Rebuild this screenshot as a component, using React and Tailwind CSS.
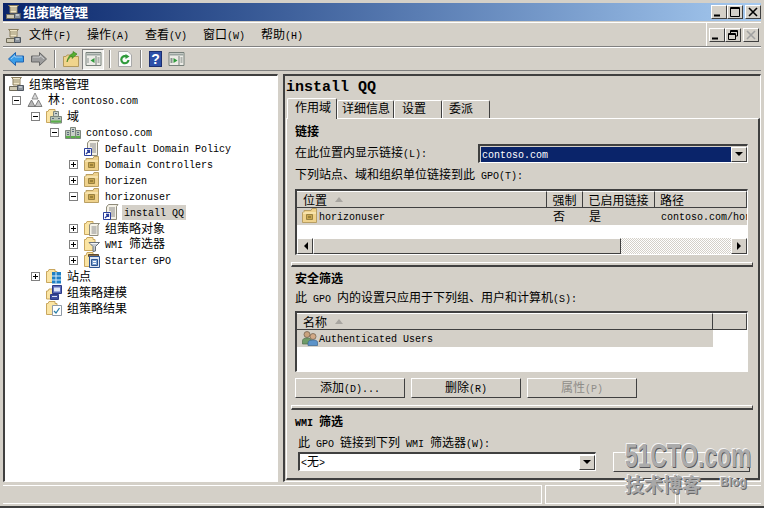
import React from 'react';

// latin runs are 6px wide per char like SimSun, cjk runs 12px
const T = ({ children, className = '' }) => (
  <span className={`whitespace-pre ${className}`}>
    {String(children)
      .split(/([\x00-\x7f]+)/)
      .filter(Boolean)
      .map((s, i) =>
        /^[\x00-\x7f]/.test(s) ? (
          <span key={i} className="font-['Liberation_Mono',monospace] text-[10px]">{s}</span>
        ) : (
          <span key={i}>{s}</span>
        )
      )}
  </span>
);

const Svg = ({ children, className = 'w-4 h-4' }) => (
  <svg viewBox="0 0 16 16" className={`shrink-0 ${className}`}>{children}</svg>
);

const Folder = () => (
  <path d="M.5 14.5V3.5H2L3 1.5H9V3.5H11V14.5Z" fill="#fbe5a4" stroke="#c9a75f" />
);

const ManagerIcon = () => (
  <Svg>
    <path d="M3.5 1.5H13.5L12 3V9H5V3Z" fill="#f0e6c8" stroke="#8b7f5f" />
    <path d="M5 4H11M5 6H11" stroke="#9a9070" />
    <path d="M1.5 10.5H11V14.5H1.5Z" fill="#cfc9b4" stroke="#6f6a58" />
    <path d="M9.5 9.5H15.5V14.5H9.5Z" fill="#8d949c" stroke="#4f5660" />
    <path d="M11 11H14" stroke="#e8eef4" />
  </Svg>
);
const ForestIcon = () => (
  <Svg>
    <path d="M8 1L11 7H5Z" fill="#d8d8d8" stroke="#777" strokeWidth=".8" />
    <path d="M4.5 8L8 14.5H1Z" fill="#b5b5b5" stroke="#666" strokeWidth=".8" />
    <path d="M11.5 8L15 14.5H8Z" fill="#c8c8c8" stroke="#666" strokeWidth=".8" />
  </Svg>
);
const Building = () => (
  <>
    <path d="M5.5 3.5H10.5V14.5H5.5Z" fill="#c9d0c9" stroke="#7d877d" />
    <path d="M.5 6.5H5.5V14.5H.5ZM10.5 6.5H15.5V14.5H10.5Z" fill="#b6c2b6" stroke="#7d877d" />
    <path d="M7 5.5H9M7 7.5H9M2 8.5H4M12 8.5H14M2 10.5H4M12 10.5H14" stroke="#5a6b7c" />
    <path d="M1 13H5M6 13H10M11 13H15" stroke="#5bb04a" strokeWidth="2" />
  </>
);
const DomainIcon = () => <Svg><Building /></Svg>;
const DomainsIcon = () => (
  <Svg>
    <Folder />
    <path d="M7.5 3.5H12.5V15H7.5Z" fill="#c9d0c9" stroke="#7d877d" />
    <path d="M4.5 8.5H15.5V15H4.5Z" fill="#b6c2b6" stroke="#7d877d" />
    <path d="M9 5.5H11M6 10.5H8M12 10.5H14" stroke="#5a6b7c" />
    <path d="M5 13.5H15" stroke="#5bb04a" strokeWidth="2" />
  </Svg>
);
const GpoIcon = () => (
  <Svg>
    <path d="M5.5 .5H15L13.5 2.5V15.5H3.5V3Z" fill="#f4f1e6" stroke="#8f8b7a" />
    <path d="M6 4H12M6 6H12M8 8H12M8 10H12M8 12H12" stroke="#8a8a8a" />
    <path d="M.5 8.5H7.5V15.5H.5Z" fill="#ffffff" stroke="#2b3f9c" />
    <path d="M2 14L5.5 10.5M3 10.5H5.5V13" stroke="#2b3f9c" strokeWidth="1.3" fill="none" />
  </Svg>
);
const OuIcon = () => (
  <Svg>
    <path d="M.5 4.5H2V2.5L9 2.5L10 .5H14.5V14.5H.5Z" fill="#efd28c" stroke="#b99f63" />
    <path d="M1 5H14" stroke="#fff2c8" />
    <path d="M4.5 6.5H10.5V11.5H4.5Z" fill="#c8a650" stroke="#9a8240" />
    <path d="M6 9H9" stroke="#6d5a20" />
  </Svg>
);
const GpoFolderIcon = () => (
  <Svg>
    <Folder />
    <path d="M6.5 3.5H15.5L14 5V15.5H5.5V5Z" fill="#f6f3e8" stroke="#8f8b7a" />
    <path d="M7.5 7H12.5M7.5 9H12.5M7.5 11H12.5M7.5 13H12.5" stroke="#8a8a8a" />
  </Svg>
);
const WmiIcon = () => (
  <Svg>
    <Folder />
    <path d="M5 6.5H15.5L11.5 10.5V15L9 15.5V10.5Z" fill="#c5cbd2" stroke="#68707a" />
    <path d="M6.5 7.5H14" stroke="#f4f6f8" />
  </Svg>
);
const StarterIcon = () => (
  <Svg>
    <path d="M.5 14.5V3.5H2L3 .5H9V3.5H11V14.5Z" fill="#fbe5a4" stroke="#c9a75f" />
    <path d="M4.5 2.5H14.5V4.5H4.5Z" fill="#8a6f4a" stroke="#5f4a2f" />
    <path d="M5.5 4.5H15.5V15.5H5.5Z" fill="#dfe7f2" stroke="#2f5590" />
    <path d="M7.5 7.5H13.5V13.5H7.5Z" fill="#7ea2cf" stroke="#2f5590" />
    <path d="M9 9.5H12M9 11.5H12" stroke="#fff" />
  </Svg>
);
const SitesIcon = () => (
  <Svg>
    <Folder />
    <path d="M6 4H15V15.5H6Z" fill="#1f7fc4" />
    <path d="M10 4V15.5M6 8H15M6 12H15" stroke="#d6ecfa" />
  </Svg>
);
const ModelingIcon = () => (
  <Svg>
    <path d="M.5 15V7H2L3 5H7V15Z" fill="#fbe5a4" stroke="#c9a75f" />
    <path d="M6.5 1.5H15.5V9.5H6.5Z" fill="#5b6ab8" stroke="#2c3a86" />
    <path d="M8 3.5H14V7.5H8Z" fill="#dfe6fa" />
    <path d="M4.5 10.5H12.5V15.5H4.5Z" fill="#3f4f9e" stroke="#2c3a86" />
    <path d="M6 12.5H11" stroke="#d8e0f8" />
  </Svg>
);
const ResultsIcon = () => (
  <Svg>
    <Folder />
    <path d="M6.5 5.5H15.5V15.5H6.5Z" fill="#fff" stroke="#8f9aa6" />
    <path d="M8 11L10 13L13.5 8" stroke="#2c7fa8" strokeWidth="1.3" fill="none" />
  </Svg>
);
const UsersIcon = () => (
  <Svg>
    <circle cx="5" cy="4.5" r="3" fill="#c9a27e" stroke="#6b5a48" strokeWidth=".7" />
    <path d="M.5 14V11Q.5 8 5 8T9.5 11V14Z" fill="#6f9c68" stroke="#4c6c48" strokeWidth=".7" />
    <circle cx="11" cy="6.5" r="3" fill="#d2a987" stroke="#6b5a48" strokeWidth=".7" />
    <path d="M6 15.5V13Q6 10 11 10T15.5 13V15.5Z" fill="#5c93c9" stroke="#38648f" strokeWidth=".7" />
  </Svg>
);

const Arrow = ({ flip, color, edge }) => (
  <svg viewBox="0 0 16 14" className={`w-4 h-[14px] shrink-0 ${flip ? '-scale-x-100' : ''}`}>
    <path d="M.5 7L7.5 .5V4H15.5V10H7.5V13.5Z" fill={color} stroke={edge} />
    <path d="M3 7L7 3.5V5H14" stroke="#ffffff" strokeOpacity=".5" fill="none" />
  </svg>
);
const UpIcon = () => (
  <Svg>
    <path d="M.5 5.5H3L4 4H7V5.5H15.5V15.5H.5Z" fill="#f0d48c" stroke="#b39a5f" />
    <path d="M4 11C5 8 7 6 9 5V7.5L14 3L10 .5V2.5C7 3 4.5 7 4 11Z" fill="#58b032" stroke="#2f7a1a" strokeWidth=".6" />
  </Svg>
);
const PaneIcon = ({ right }) => (
  <Svg className="w-[17px] h-4">
    <path d="M.5 1.5H15.5V14.5H.5Z" fill="#ecebe6" stroke="#77807a" />
    <path d="M1 2.5H15V4.5H1Z" fill="#9aa4a0" />
    <path d="M10.5 5V14" stroke="#77807a" />
    <path d="M12 7H14M12 9H14M12 11H14" stroke="#77807a" />
    {right ? (
      <path d="M5 7V12L9 9.5Z" fill="#2f9a3a" />
    ) : (
      <path d="M9 7V12L5 9.5Z" fill="#2f9a3a" />
    )}
    <path d={right ? 'M2 7H4V12H2Z' : 'M2 7H3V12H2Z'} fill="#8a9490" />
  </Svg>
);
const RefreshIcon = () => (
  <Svg>
    <path d="M1.5 .5H11L14.5 4V15.5H1.5Z" fill="#fafafa" stroke="#a9a9a9" />
    <path d="M11.5 9A3.6 3.6 0 1 1 10 5.7" stroke="#2f9a3a" strokeWidth="2.2" fill="none" />
    <path d="M8.5 3L12.5 5.5L8.5 8Z" fill="#2f9a3a" />
  </Svg>
);
const HelpIcon = () => (
  <div className="w-[13px] h-4 mx-[1px] bg-[#2c4fa8] border border-[#1c2f70] flex items-center justify-center shrink-0 text-white font-bold text-[14px] leading-none font-['Liberation_Sans',sans-serif]">
    ?
  </div>
);

const Sep = () => <div className="w-[2px] h-[18px] border-l border-l-[#808080] border-r border-r-white shrink-0" />;

const Bevel = 'bg-[#d4d0c8] border-t border-l border-t-white border-l-white border-r border-b border-r-[#404040] border-b-[#404040]';

const Glyph = ({ type, muted }) => {
  const c = muted ? '#a0a0a0' : '#000';
  return (
    <svg viewBox="0 0 12 10" className="w-3 h-[10px]">
      {type === 'min' && <path d="M1 8.5H7" stroke={c} strokeWidth="2" />}
      {type === 'max' && <path d="M1.5 .5H10.5V9.5H1.5ZM1 1.5H11" stroke={c} fill="none" />}
      {type === 'restore' && <path d="M3.5 3V.5H10.5V6H8M1.5 3.5H8.5V9.5H1.5ZM1 4.5H9M3 1.5H11" stroke={c} fill="none" />}
      {type === 'close' && <path d="M2 1L10 9M10 1L2 9" stroke={c} strokeWidth="1.6" />}
    </svg>
  );
};
const WinBtn = ({ type, muted, className = 'w-4' }) => (
  <div className={`${Bevel} h-[14px] flex items-center justify-center shrink-0 ${className}`}>
    <Glyph type={type} muted={muted} />
  </div>
);

const levels = ['pl-[3px]', 'pl-[7px]', 'pl-[26px]', 'pl-[45px]', 'pl-[64px]', 'pl-[83px]'];

const tree = [
  { level: 0, icon: ManagerIcon, text: '组策略管理', noSlot: true },
  { level: 1, icon: ForestIcon, box: '-', text: '林: contoso.com' },
  { level: 2, icon: DomainsIcon, box: '-', text: '域' },
  { level: 3, icon: DomainIcon, box: '-', text: 'contoso.com' },
  { level: 4, icon: GpoIcon, text: 'Default Domain Policy' },
  { level: 4, icon: OuIcon, box: '+', text: 'Domain Controllers' },
  { level: 4, icon: OuIcon, box: '+', text: 'horizen' },
  { level: 4, icon: OuIcon, box: '-', text: 'horizonuser' },
  { level: 5, icon: GpoIcon, text: 'install QQ', selected: true },
  { level: 4, icon: GpoFolderIcon, box: '+', text: '组策略对象' },
  { level: 4, icon: WmiIcon, box: '+', text: 'WMI 筛选器' },
  { level: 4, icon: StarterIcon, box: '+', text: 'Starter GPO' },
  { level: 2, icon: SitesIcon, box: '+', text: '站点' },
  { level: 2, icon: ModelingIcon, text: '组策略建模' },
  { level: 2, icon: ResultsIcon, text: '组策略结果' },
];

const TreeRow = ({ row }) => {
  const Icon = row.icon;
  return (
    <div className={`flex items-center h-4 ${levels[row.level]}`}>
      {!row.noSlot && (
        <div className="w-[15px] shrink-0">
          {row.box && (
            <div className="relative w-[9px] h-[9px] border border-[#808080] bg-white">
              <div className="absolute left-[1px] top-[3px] w-[5px] h-px bg-black" />
              {row.box === '+' && <div className="absolute left-[3px] top-[1px] w-px h-[5px] bg-black" />}
            </div>
          )}
        </div>
      )}
      <Icon />
      <div className={row.selected ? 'ml-[3px] pl-[2px] pr-[2px] bg-[#d4d0c8] h-[15px] flex items-center' : 'ml-[5px]'}>
        <T>{row.text}</T>
      </div>
    </div>
  );
};

const SortUp = () => (
  <svg viewBox="0 0 8 5" className="w-2 h-[5px] ml-[8px] shrink-0">
    <path d="M0 5L4 0L8 5Z" fill="#a8a5a0" />
  </svg>
);

const HeadCell = ({ className = '', children }) => (
  <div className={`h-[17px] flex items-center bg-[#d4d0c8] border-r border-b border-r-[#404040] border-b-[#404040] border-t border-t-white overflow-hidden ${className}`}>
    {children}
  </div>
);

const ScrollBtn = ({ left }) => (
  <div className={`${Bevel} w-4 h-4 flex items-center justify-center shrink-0`}>
    <svg viewBox="0 0 5 8" className="w-[5px] h-2">
      <path d={left ? 'M5 0V8L1 4Z' : 'M0 0V8L4 4Z'} fill="#000" />
    </svg>
  </div>
);

const ComboBtn = () => (
  <div className={`${Bevel} w-4 h-[15px] flex items-center justify-center shrink-0`}>
    <svg viewBox="0 0 8 4" className="w-2 h-1">
      <path d="M0 0H8L4 4Z" fill="#000" />
    </svg>
  </div>
);

const Divider = () => (
  <div className="-ml-[4px] w-[462px] h-[5px] border-t border-t-white border-b-2 border-b-[#404040] border-r border-r-[#404040] border-l border-l-white shrink-0" />
);

const Button = ({ children, muted }) => (
  <div className={`${Bevel} w-[110px] h-[20px] pt-px flex items-center justify-center ${muted ? 'text-[#8f8d88]' : ''}`}>
    <T>{children}</T>
  </div>
);

const Heading = ({ children, className = '' }) => (
  <div className={`h-4 flex items-center font-bold ${className}`}>
    <T>{children}</T>
  </div>
);

const Label = ({ children, className = '' }) => (
  <div className={`h-4 flex items-center ${className}`}>
    <T>{children}</T>
  </div>
);

const Sunken = 'border-t-2 border-l-2 border-t-[#404040] border-l-[#404040] border-r border-b border-r-white border-b-white';

const App = () => {
  return (
    <div className="relative w-[764px] h-[508px] overflow-hidden bg-[#d4d0c8] flex flex-col pt-[3px] px-[3px] border-b-2 border-b-[#404040] text-[12px] leading-4 text-black font-['Noto_Sans_CJK_SC','Liberation_Sans',sans-serif]">
      {/* Title bar */}
      <div className="h-[18px] shrink-0 flex items-center pl-[2px] pr-0 bg-gradient-to-r from-[#0a246a] to-[#a6caf0]">
        <ManagerIcon />
        <span className="ml-[2px] text-white font-bold text-[13px]">组策略管理</span>
        <div className="ml-auto flex items-center">
          <WinBtn type="min" />
          <WinBtn type="max" />
          <WinBtn type="close" className="w-4 ml-[2px]" />
        </div>
      </div>

      {/* Menu bar */}
      <div className="mt-px h-[25px] shrink-0 flex items-center border-t border-t-white border-b border-b-[#808080] pl-[2px]">
        <div className="flex items-center pt-[2px]">
          <ManagerIcon />
          <div className="ml-2 flex">
            {['文件(F)', '操作(A)', '查看(V)', '窗口(W)', '帮助(H)'].map((m) => (
              <div key={m} className="w-[58px]"><T>{m}</T></div>
            ))}
          </div>
        </div>
        <div className="ml-auto h-full flex items-center border-l border-l-white pl-[2px] pr-[2px]">
          <WinBtn type="min" />
          <WinBtn type="restore" />
          <WinBtn type="close" muted className="w-4 ml-[2px]" />
        </div>
      </div>

      {/* Toolbar */}
      <div className="h-[24px] shrink-0 flex items-center border-b border-b-[#808080] border-t border-t-white">
        <div className="ml-[5px]"><Arrow color="#3a9de8" edge="#1f62b0" /></div>
        <div className="ml-[7px]"><Arrow flip color="#9c9c9c" edge="#666" /></div>
        <div className="ml-[7px]"><Sep /></div>
        <div className="ml-[7px]"><UpIcon /></div>
        <div className="ml-[3px] w-[22px] h-[21px] flex items-center justify-center bg-[#f0efeb] border-t border-l border-t-[#808080] border-l-[#808080] border-r border-b border-r-white border-b-white">
          <PaneIcon />
        </div>
        <div className="ml-[5px]"><Sep /></div>
        <div className="ml-[6px]"><RefreshIcon /></div>
        <div className="ml-[7px]"><Sep /></div>
        <div className="ml-[6px]"><HelpIcon /></div>
        <div className="ml-[5px]"><PaneIcon right /></div>
      </div>

      {/* Main */}
      <div className="mt-[3px] h-[408px] shrink-0 flex">
        <div className={`w-[275px] shrink-0 bg-white ${Sunken}`}>
          {tree.map((row, i) => <TreeRow key={i} row={row} />)}
        </div>

        <div className={`ml-[5px] w-[478px] shrink-0 flex flex-col pl-px ${Sunken}`}>
          <div className="h-[21px] pt-[2px] shrink-0 flex items-center font-bold text-[15px] font-['Liberation_Mono',monospace]">install QQ</div>

          {/* Tabs */}
          <div className="h-[21px] shrink-0 flex items-end pl-px relative z-10">
            <div className="w-[50px] h-[21px] -mb-px bg-[#d4d0c8] pl-[7px] border-t border-l border-r border-t-white border-l-white border-r-[#404040] rounded-t-[2px]">作用域</div>
            <div className="w-[57px] h-[18px] pl-[4px] -mt-px border-t border-l border-r border-t-white border-l-white border-r-[#404040] rounded-t-[2px] leading-[14px]">详细信息</div>
            <div className="w-[48px] h-[18px] pl-[7px] border-t border-l border-r border-t-white border-l-white border-r-[#404040] rounded-t-[2px] leading-[14px]">设置</div>
            <div className="w-[48px] h-[18px] pl-[6px] border-t border-l border-r border-t-white border-l-white border-r-[#404040] rounded-t-[2px] leading-[14px]">委派</div>
          </div>

          {/* Tab panel */}
          <div className="w-[474px] h-[362px] shrink-0 flex flex-col pl-[8px] pt-[4px] border-t border-l border-t-white border-l-white border-r-2 border-b-2 border-r-[#404040] border-b-[#404040]">
            <Heading>链接</Heading>
            <div className="mt-[5px] w-[453px] flex items-start justify-between h-[19px]">
              <T>在此位置内显示链接(L):</T>
              <div className={`w-[270px] h-[19px] flex items-center ${Sunken}`}>
                <div className="flex-1 h-[15px] bg-[#0a246a] text-white flex items-center pt-px pl-[1px] ml-px"><T>contoso.com</T></div>
                <ComboBtn />
              </div>
            </div>
            <Label className="mt-[4px]">下列站点、域和组织单位链接到此 GPO(T):</Label>

            <div className={`mt-[6px] w-[453px] h-[66px] bg-white flex flex-col overflow-hidden ${Sunken}`}>
              <div className="flex shrink-0">
                <HeadCell className="w-[250px] pl-[6px]">位置<SortUp /></HeadCell>
                <HeadCell className="w-[36px] justify-center">强制</HeadCell>
                <HeadCell className="w-[72px] justify-center">已启用链接</HeadCell>
                <HeadCell className="flex-1 pl-[5px]">路径</HeadCell>
              </div>
              <div className="h-[17px] shrink-0 flex items-center pb-px bg-[#d4d0c8] overflow-hidden whitespace-pre">
                <div className="w-[250px] flex items-center pl-[5px] shrink-0"><OuIcon /><T className="ml-px">horizonuser</T></div>
                <div className="w-[36px] pl-[6px] shrink-0">否</div>
                <div className="w-[72px] pl-[6px] shrink-0">是</div>
                <div className="pl-[6px]"><T>contoso.com/hor</T></div>
              </div>
              <div className="flex-1" />
              <div className="h-4 shrink-0 flex">
                <ScrollBtn left />
                <div className={`${Bevel} w-[308px]`} />
                <div className="flex-1 bg-[repeating-conic-gradient(#d4d0c8_0_25%,#ffffff_0_50%)] bg-[length:2px_2px]" />
                <ScrollBtn />
              </div>
            </div>

            <div className="mt-[7px]"><Divider /></div>

            <Heading className="mt-[3px]">安全筛选</Heading>
            <Label className="mt-[4px]">此 GPO 内的设置只应用于下列组、用户和计算机(S):</Label>

            <div className={`mt-[5px] w-[453px] h-[61px] bg-white flex flex-col overflow-hidden ${Sunken}`}>
              <div className="flex shrink-0">
                <HeadCell className="w-[416px] pl-[6px]">名称<SortUp /></HeadCell>
                <HeadCell className="flex-1" />
              </div>
              <div className="h-[17px] w-[416px] shrink-0 flex items-center pl-[5px] pb-px bg-[#d4d0c8]">
                <UsersIcon /><T className="ml-px">Authenticated Users</T>
              </div>
            </div>

            <div className="mt-[6px] flex gap-[6px]">
              <Button>添加(D)...</Button>
              <Button>删除(R)</Button>
              <Button muted>属性(P)</Button>
            </div>

            <div className="mt-[7px]"><Divider /></div>

            <Heading className="mt-[4px]">WMI 筛选</Heading>
            <Label className="mt-[5px] ml-[3px]">此 GPO 链接到下列 WMI 筛选器(W):</Label>

            <div className="mt-[1px] flex ml-[3px]">
              <div className={`w-[298px] h-[19px] flex items-center bg-white ${Sunken}`}>
                <div className="flex-1 pl-[1px]"><T>{'<无>'}</T></div>
                <ComboBtn />
              </div>
              <div className={`${Bevel} ml-[17px] w-[137px] h-[20px]`} />
            </div>
          </div>
        </div>
      </div>

      {/* Status bar */}
      <div className="mt-[3px] h-[19px] shrink-0 flex gap-[3px]">
        <div className="w-[539px] border-t border-r border-b border-white" />
        <div className="w-[131px] border border-white" />
        <div className="flex-1 border-t border-l border-b border-white" />
      </div>

      {/* Watermark */}
      <div className="absolute left-[625px] top-[438px] w-[130px] h-[60px] pointer-events-none">
        <div className="absolute left-0 top-0 origin-left scale-x-[0.67] text-[34px] leading-[34px] font-bold text-[#ababab] font-['Liberation_Sans',sans-serif] [text-shadow:1px_1px_0_#55555a,-1px_-1px_0_#f4f4f4]">51CTO.com</div>
        <div className="absolute left-0 top-[35px] text-[19px] leading-[22px] font-bold text-[#a8a8a8] [text-shadow:1px_1px_0_#6a6a6a,-1px_-1px_0_#f4f4f4]">技术博客</div>
        <div className="absolute left-[95px] top-[37px] text-[12px] leading-[14px] font-bold text-[#a8a8a8] font-['Liberation_Sans',sans-serif] [text-shadow:1px_1px_0_#6a6a6a,-1px_-1px_0_#f4f4f4]">Blog</div>
      </div>
    </div>
  );
};

export default App;
